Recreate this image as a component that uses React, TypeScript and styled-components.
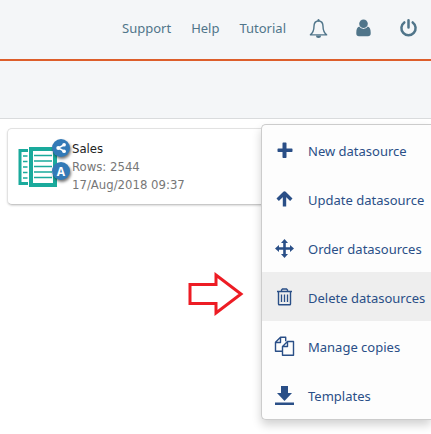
import React from "react";
import styled, { createGlobalStyle } from "styled-components";

const GlobalStyle = createGlobalStyle`
  * { box-sizing: border-box; }
  body {
    margin: 0;
    background: #fff;
    font-family: "Noto Sans", Tahoma, sans-serif;
    font-size: 13px;
  }
  svg { display: block; flex: none; }
`;

const Header = styled.header`
  display: flex;
  align-items: center;
  justify-content: flex-end;
  height: 61px;
  padding: 0 10px 3px 0;
  background: #f4f6f8;
  border-bottom: 2px solid #dd5e2b;
`;

const Nav = styled.nav`
  display: flex;
  gap: 20px;
  margin-right: 20px;
`;

const NavLink = styled.a`
  color: #50758a;
  text-decoration: none;
  line-height: 20px;
`;

const HeaderActions = styled.div`
  display: flex;
  gap: 20px;
`;

const IconButton = styled.button`
  display: flex;
  align-items: center;
  justify-content: center;
  width: 25px;
  height: 24px;
  padding: 0;
  border: 0;
  background: none;
  color: #50758a;
`;

const SubBar = styled.div`
  height: 58px;
  background: #f4f6f8;
  border-bottom: 1px solid #d9dbdd;
`;

const Content = styled.main`
  display: grid;
  align-items: start;
  padding: 5px 0 14px 7px;
`;

const Card = styled.article`
  grid-area: 1 / 1;
  display: flex;
  gap: 12px;
  margin-top: 4px;
  padding: 11px 10px 10px;
  border: 1px solid #e2e2e2;
  border-bottom-color: #c8c8c8;
  border-right: 0;
  border-radius: 5px 0 0 5px;
  box-shadow: 0 1px 2px rgba(0, 0, 0, 0.14);
  background: #fff;
`;

const SourceIcon = styled.div`
  position: relative;
  width: 42px;
  padding-top: 7px;
`;

const Badge = styled.span<{ $top: number }>`
  position: absolute;
  left: 34px;
  top: ${(p) => p.$top}px;
  display: flex;
  align-items: center;
  justify-content: center;
  width: 18px;
  height: 18px;
  border-radius: 50%;
  background: #337ab7;
  color: #fff;
  font: bold 12px "Open Sans", sans-serif;
  box-shadow: 1px 2px 3px rgba(0, 0, 0, 0.55);
`;

const CardText = styled.div`
  font-family: "DejaVu Sans Condensed", "DejaVu Sans", sans-serif;
  font-size: 13px;
  line-height: 18px;
  color: #777;
`;

const CardTitle = styled.div`
  color: #222;
`;

const Menu = styled.ul`
  grid-area: 1 / 1;
  justify-self: end;
  z-index: 1;
  width: 170px;
  margin: 0;
  padding: 0;
  list-style: none;
  background: #fdfdfd;
  border: 1px solid #ccc;
  border-right: 0;
  border-radius: 5px 0 0 5px;
  box-shadow: 0 5px 10px rgba(0, 0, 0, 0.18);
`;

const MenuItem = styled.li`
  position: relative;
`;

const MenuButton = styled.button<{ $active?: boolean }>`
  display: flex;
  align-items: center;
  gap: 13px;
  width: 100%;
  height: 49px;
  padding: 2px 0 0 12px;
  border: 0;
  background: ${(p) => (p.$active ? "#eee" : "transparent")};
  color: #2a4f87;
  font: inherit;
  text-align: left;
  white-space: nowrap;
`;

const Pointer = styled.svg`
  position: absolute;
  right: 100%;
  top: 0;
  margin-right: 18px;
`;

const Glyph = ({ children }: { children: React.ReactNode }) => (
  <svg width="21" height="21" viewBox="0 0 21 21" fill="currentColor" aria-hidden="true">
    {children}
  </svg>
);

const Bell = () => (
  <Glyph>
    <path
      d="M10.5 2.8C7.3 3.2 6 5.4 6 8.3c0 4.3-1.2 6.6-3.6 8.6h16.2c-2.4-2-3.6-4.3-3.6-8.6 0-2.9-1.300-5.100-4.500-5.500z"
      fill="none"
      stroke="currentColor"
      strokeWidth="1.4"
      strokeLinejoin="round"
    />
    <rect x="9.5" y="1" width="2" height="2.5" rx="1" />
    <path d="M8 17.4a2.500 2.500 0 0 0 5 0z" />
  </Glyph>
);

const Person = () => (
  <Glyph>
    <circle cx="10.5" cy="5.8" r="4.3" />
    <path d="M6.3 8.6C4.2 9.1 3.300 11.200 3.300 14.600v.9c0 1.800 1 2.700 2.700 2.700h9c1.700 0 2.700-.9 2.700-2.700v-.9c0-3.400-.9-5.500-3-6-1 1.300-2.400 2.300-4.200 2.300S7.300 9.900 6.300 8.600z" />
  </Glyph>
);

const Power = () => (
  <Glyph>
    <path
      d="M6.3 4.400a7.100 7.100 0 1 0 8.400 0M10.500 2.300v7.200"
      fill="none"
      stroke="currentColor"
      strokeWidth="2.5"
      strokeLinecap="round"
    />
  </Glyph>
);

const Plus = () => (
  <Glyph>
    <path d="M8.500 3.200q0-.7.7-.7h2.600q.7 0 .7.700v5.300h5.300q.7 0 .7.700v2.100q0 .7-.7.700h-5.300v5.300q0 .7-.7.700H9.200q-.7 0-.7-.7V12H4.200q-.7 0-.7-.7V9.200q0-.7.7-.7h4.300z" />
  </Glyph>
);

const ArrowUp = () => (
  <Glyph>
    <path
      d="M3.700 10.800l6.800-6.800 6.800 6.800M10.500 6v11.500"
      fill="none"
      stroke="currentColor"
      strokeWidth="3.4"
      strokeLinejoin="round"
    />
  </Glyph>
);

const Move = () => (
  <Glyph>
    <path d="M10.500 1l3.500 4h-2.200v4.200H16V7l4 3.500-4 3.500v-2.200h-4.200V16H14l-3.500 4L7 16h2.200v-4.200H5V14l-4-3.500L5 7v2.200h4.200V5H7z" />
  </Glyph>
);

const Trash = () => (
  <Glyph>
    <path
      d="M3 4.500h15M4.500 5v12q0 .8.800.8h10.400q.8 0 .8-.8V5M7.500 4.500V3l1-1h4l1 1v1.500"
      fill="none"
      stroke="currentColor"
      strokeWidth="1.400"
    />
    <path d="M7.500 7.500v7.500M10.500 7.500v7.500M13.500 7.500v7.500" fill="none" stroke="currentColor" strokeWidth="1.300" />
  </Glyph>
);

const Copies = () => (
  <Glyph>
    <path
      d="M8.500 15.300h-7v-9l5-5h5.200v4M6.500 1.500v5h-5M8.500 19.300v-8.800l5-5h6v13.800zM13.500 5.500v5h-5"
      fill="none"
      stroke="currentColor"
      strokeWidth="1.400"
      strokeLinejoin="round"
    />
  </Glyph>
);

const Download = () => (
  <Glyph>
    <path d="M7 1h7v7h4l-7.500 8L3 8h4zM1 17.500h19V20H1z" />
  </Glyph>
);

const DocumentsIcon = () => (
  <svg width="40" height="42" viewBox="0 0 40 42" aria-hidden="true">
    <path d="M10 3.500H2v33h8" fill="none" stroke="#1aaa9c" strokeWidth="3" />
    <path d="M5 9h4.500M5 14.500h4.500M5 20h4.500M5 25.500h4.500M5 31h4.500" stroke="#1aaa9c" strokeWidth="1.400" />
    <rect x="13" y="2" width="24" height="36" fill="#fff" stroke="#1aaa9c" strokeWidth="4" />
    <path d="M16 8.500h18M16 14h18M16 19.500h18M16 25h18M16 30.500h18" stroke="#1aaa9c" strokeWidth="1.600" />
  </svg>
);

const ShareIcon = () => (
  <svg width="12" height="12" viewBox="0 0 13 13" fill="#fff" aria-hidden="true">
    <path d="M10 3L3.500 6.500 10 10" fill="none" stroke="#fff" strokeWidth="1.600" />
    <circle cx="3.500" cy="6.500" r="2.100" />
    <circle cx="9.800" cy="3" r="2" />
    <circle cx="9.800" cy="10" r="2" />
  </svg>
);

const menuItems = [
  { label: "New datasource", icon: <Plus /> },
  { label: "Update datasource", icon: <ArrowUp /> },
  { label: "Order datasources", icon: <Move /> },
  { label: "Delete datasources", icon: <Trash />, active: true },
  { label: "Manage copies", icon: <Copies /> },
  { label: "Templates", icon: <Download /> },
];

export default function App() {
  return (
    <>
      <GlobalStyle />
      <Header>
        <Nav>
          <NavLink href="#support">Support</NavLink>
          <NavLink href="#help">Help</NavLink>
          <NavLink href="#tutorial">Tutorial</NavLink>
        </Nav>
        <HeaderActions>
          <IconButton aria-label="Notifications"><Bell /></IconButton>
          <IconButton aria-label="Account"><Person /></IconButton>
          <IconButton aria-label="Log out"><Power /></IconButton>
        </HeaderActions>
      </Header>
      <SubBar />
      <Content>
        <Card>
          <SourceIcon>
            <DocumentsIcon />
            <Badge $top={-1}><ShareIcon /></Badge>
            <Badge $top={22}>A</Badge>
          </SourceIcon>
          <CardText>
            <CardTitle>Sales</CardTitle>
            <div>Rows: 2544</div>
            <div>17/Aug/2018 09:37</div>
          </CardText>
        </Card>
        <Menu>
          {menuItems.map((item) => (
            <MenuItem key={item.label}>
              {item.active && (
                <Pointer width="57" height="44" viewBox="0 0 57 44" aria-hidden="true">
                  <path d="M3 12.500h26V3l25 19-25 19V31.500H3z" fill="#fff" stroke="#ed1c24" strokeWidth="3" />
                </Pointer>
              )}
              <MenuButton $active={item.active}>
                {item.icon}
                {item.label}
              </MenuButton>
            </MenuItem>
          ))}
        </Menu>
      </Content>
    </>
  );
}
